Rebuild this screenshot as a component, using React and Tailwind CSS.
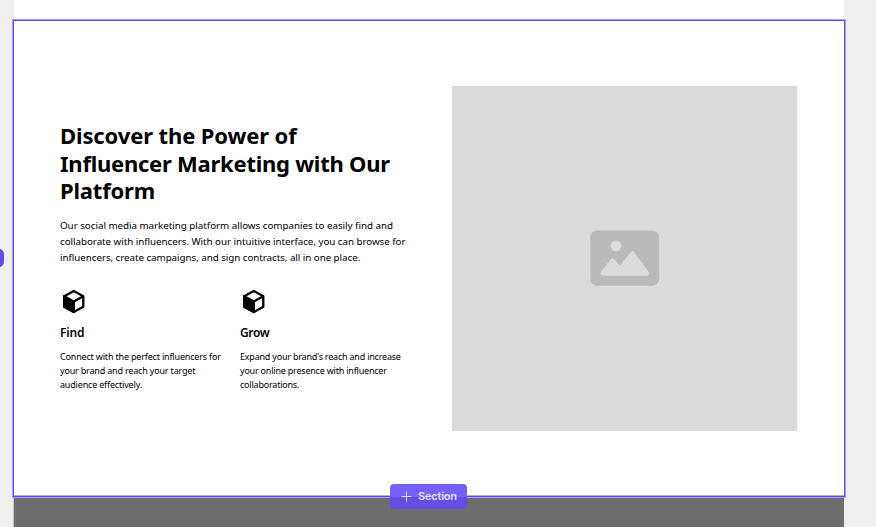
const features = [
  {
    title: 'Find',
    titleTracking: 'tracking-[-0.2px]',
    lines: [
      ['Connect with the perfect influencers for', 'tracking-[-0.18px]'],
      ['your brand and reach your target', 'tracking-[-0.18px]'],
      ['audience effectively.', 'tracking-[-0.18px]'],
    ],
  },
  {
    title: 'Grow',
    titleTracking: 'tracking-[-0.4px]',
    lines: [
      ["Expand your brand's reach and increase", 'tracking-[-0.21px]'],
      ['your online presence with influencer', 'tracking-[-0.21px]'],
      ['collaborations.', 'tracking-[-0.21px]'],
    ],
  },
];

function CubeIcon() {
  return (
    <svg
      className="block h-[27px] w-[27px]"
      viewBox="0 0 27 27"
      fill="none"
      stroke="currentColor"
      strokeWidth="2.3"
      strokeLinejoin="round"
    >
      <path d="M13.8 2.9 23.3 8.2V18.8L13.8 24.1 4.2 18.8V8.2z" />
      <path d="M13.8 13.5 23.3 8.2" />
      <path d="M4.2 8.2 13.8 13.5V24L4.2 18.8z" fill="currentColor" />
    </svg>
  );
}

function ImageIcon() {
  return (
    <svg className="block h-[56px] w-[70px]" viewBox="0 0 70 56">
      <rect x="0.2" y="0.5" width="69" height="55.2" rx="7" fill="#bababa" />
      <circle cx="26" cy="16" r="5.4" fill="#dbdbdb" />
      <path
        d="M12.7 45.7q-3.3-.4-2-3.2L20.7 29.3q1.7-2 3.4 0l5.7 6.2L40.9 22q1.6-2 3.2 0L58.9 42.3q1 2.9-1.8 3.4z"
        fill="#dbdbdb"
      />
    </svg>
  );
}

function Feature({ title, titleTracking, lines }) {
  return (
    <div className="w-[180px]">
      <CubeIcon />
      <h3 className={'mt-[9px] text-[12px] leading-[18px] font-semibold ' + titleTracking}>{title}</h3>
      <p className="mt-[8px] text-[9px] leading-[14px]">
        {lines.map(([text, tracking]) => (
          <span key={text} className={'block whitespace-nowrap ' + tracking}>{text}</span>
        ))}
      </p>
    </div>
  );
}

export default function App() {
  return (
    <div className="relative flex h-[527px] w-[876px] flex-col overflow-hidden bg-[#f0efed] font-['Noto_Sans','Open_Sans',sans-serif] text-black">
      <div className="ml-[14px] h-[19px] w-[830px] shrink-0 bg-white" />
      <section className="ml-[12px] h-[479px] w-[834px] shrink-0 border border-[#a99cf9]">
        <div className="flex h-full items-start border border-[#6248f7] bg-white pl-[46px] shadow-[inset_0_-1px_0_#b8b8b8]">
          <div className="w-[392px] pt-[101px]">
            <h2 className="text-[22px] leading-[27.5px] font-bold">
              <span className="block whitespace-nowrap tracking-[-0.12px]">Discover the Power of</span>
              <span className="block whitespace-nowrap tracking-[-0.24px]">Influencer Marketing with Our</span>
              <span className="block whitespace-nowrap tracking-[-0.2px]">Platform</span>
            </h2>
            <p className="mt-[13.5px] text-[9.8px] leading-[16px]">
              <span className="block whitespace-nowrap tracking-[-0.03px]">Our social media marketing platform allows companies to easily find and</span>
              <span className="block whitespace-nowrap tracking-[-0.04px]">collaborate with influencers. With our intuitive interface, you can browse for</span>
              <span className="block whitespace-nowrap tracking-[-0.05px]">influencers, create campaigns, and sign contracts, all in one place.</span>
            </p>
            <div className="mt-[22px] flex">
              {features.map((feature) => (
                <Feature key={feature.title} {...feature} />
              ))}
            </div>
          </div>
          <div className="mt-[64.5px] flex h-[345.5px] w-[345px] items-center justify-center bg-[#dbdbdb]">
            <ImageIcon />
          </div>
        </div>
      </section>
      <div className="ml-[13px] h-[29px] w-[831px] shrink-0 border-l border-[#c4c4c3] bg-[#6d6d6d]" />
      <div className="absolute top-[249px] -left-[20px] h-[18px] w-[24.4px] rounded-[5px] bg-[#6248f7]" />
      <button className="absolute top-[484px] left-[390px] flex h-[25px] w-[77px] items-center rounded-[4px] bg-linear-to-b from-[#7660fb] from-50% to-[#644ee6] to-50% pl-[11px] font-['Inter',sans-serif] text-[11px] font-semibold tracking-[-0.2px] text-[#e6e1ff]">
        <svg className="mr-[6px] h-[11px] w-[11px]" viewBox="0 0 11 11" stroke="#e4dfff" strokeWidth="1">
          <path d="M5.5 0.5v10M.5 5.5h10" />
        </svg>
        Section
      </button>
    </div>
  );
}
